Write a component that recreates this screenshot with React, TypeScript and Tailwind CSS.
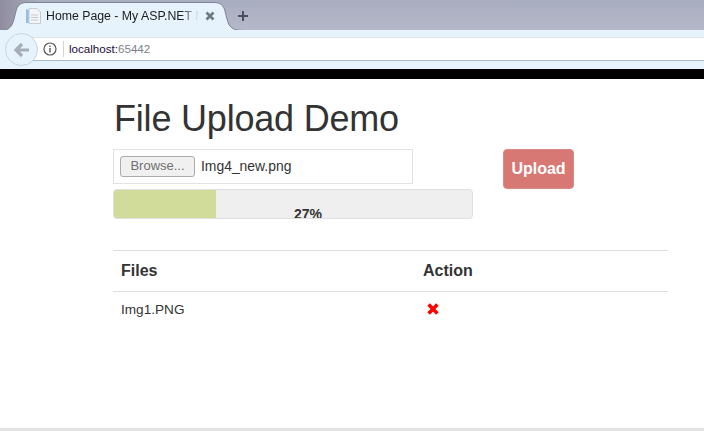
import React from 'react';

const FONT = "font-['Liberation_Sans',Arial,sans-serif]";

function TabShape() {
  return (
    <svg className="absolute left-0 top-0" width="244" height="31" viewBox="0 0 244 31">
      <path
        d="M0 30.5 C9 30.5 12 27 14 19 L16 11 C17.500 5 21 2.500 27 2.500 L214 2.500 C220 2.500 223.500 5 225 11 L227 19 C229 27 232 30.500 244 30.500 Z"
        fill="#e6f2fc"
        stroke="#7d8295"
        strokeWidth="1"
      />
      <path d="M0 31 H244" stroke="#e6f2fc" strokeWidth="1.500" />
    </svg>
  );
}

function PageIcon() {
  return (
    <svg width="16" height="16" viewBox="0 0 16 16">
      <path d="M1 1.500 H8 V15 H1 Z" fill="#8fbfe6" />
      <path d="M4 .5 H12 L15.500 4 V15.500 H4 Z" fill="#f2f4f6" stroke="#c5ccd4" />
      <path d="M6 7 H13 M6 9.500 H13 M6 12 H13" stroke="#c6ccd3" />
    </svg>
  );
}

function BrowserChrome() {
  return (
    <div>
      <div className="relative h-[30px] bg-gradient-to-b from-[#a9adc0] to-[#b4b8c8]">
        <div className="absolute left-0 top-0 h-full w-[40px] bg-gradient-to-r from-[#8f8c9e] to-transparent" />
        <TabShape />
        <div className="relative flex h-[30px] items-center pl-[25px] pt-[2px]">
          <PageIcon />
          <span className="ml-[5px] w-[153px] overflow-hidden whitespace-nowrap text-[12.3px] text-[#1c1c1c] [mask-image:linear-gradient(to_right,black_88%,transparent)]">
            Home Page - My ASP.NET MVC
          </span>
          <svg className="ml-[5px]" width="12" height="12" viewBox="0 0 12 12">
            <path d="M2.500 2.500 L9.500 9.500 M9.500 2.500 L2.500 9.500" stroke="#6f7780" strokeWidth="2.600" />
          </svg>
          <svg className="ml-[21px]" width="12" height="12" viewBox="0 0 12 12">
            <path d="M6 1 V11 M1 6 H11" stroke="#4a5060" strokeWidth="2" />
          </svg>
        </div>
      </div>
      <div className="relative h-[39px] bg-[#e6f2fc] pt-[7px]">
        <div className="ml-[21px] flex h-[24px] items-center border-y border-y-[#dce3ea] border-b-[#a9bccd] bg-white pl-[22px]">
          <svg width="14" height="14" viewBox="0 0 14 14" fill="none">
            <circle cx="7" cy="7" r="6" stroke="#555" strokeWidth="1.200" />
            <path d="M7 6 V10.500 M7 3.500 V5" stroke="#555" strokeWidth="1.400" />
          </svg>
          <span className="ml-[6px] mr-[5px] h-[16px] w-px bg-[#d3d3d3]" />
          <span className="text-[11.6px] text-[#1a0a3a]">
            localhost:<span className="text-[#7a7f88]">65442</span>
          </span>
        </div>
        <div className="absolute left-[5px] top-[3px] flex h-[33px] w-[33px] items-center justify-center rounded-full border border-[#c5d5e4] bg-[#e6f2fc]">
          <svg width="18" height="16" viewBox="0 0 18 16" fill="none">
            <path d="M9 2 L3 8 L9 14 M3.500 8 H16" stroke="#a4adb8" strokeWidth="3.200" />
          </svg>
        </div>
      </div>
      <div className="h-[10px] bg-black" />
    </div>
  );
}

export default function App() {
  return (
    <div className={`flex h-[431px] w-[704px] flex-col overflow-hidden bg-white ${FONT}`}>
      <BrowserChrome />
      <div className="flex-1 pl-[113px] pr-[36px] text-[#333]">
        <h1 className="mt-[20px] pl-px text-[36px] leading-[40px] tracking-[-0.2px]">File Upload Demo</h1>

        <div className="mt-[10px] flex">
          <div className="w-[360px]">
            <div className="flex h-[35px] w-[300px] items-center border border-[#e3e3e3] pl-[6px] text-sm">
              <span className="flex h-[21px] w-[75px] items-center justify-center rounded-[3px] border border-[#ababab] bg-[#f0f0f0] text-[13px] text-[#707070]">
                Browse...
              </span>
              <span className="ml-[6px] text-[13.9px]">Img4_new.png</span>
            </div>
            <div className="mt-[5px] flex h-[30px] overflow-hidden rounded-[4px] border border-[#e0e0e0] bg-[#efefef]">
              <div className="h-full w-[102px] bg-[#d1dc9a]" />
              <span className="flex-1 pr-[72px] pt-[15px] text-center text-sm leading-[18px] font-bold">27%</span>
            </div>
          </div>
          <button className="ml-[30px] h-[40px] w-[71px] rounded-[4px] border border-[#dc8a85] bg-[#d87874] text-base font-bold text-white">
            Upload
          </button>
        </div>

        <table className="mt-[31px] w-[555px] table-fixed border-collapse text-left">
          <thead>
            <tr className="border-y border-[#ddd]">
              <th className="h-[41px] w-[302px] pl-[8px] text-base font-bold">Files</th>
              <th className="pl-[8px] text-base font-bold">Action</th>
            </tr>
          </thead>
          <tbody>
            <tr>
              <td className="h-[37px] pb-[1px] pl-[8px] text-[13.6px]">Img1.PNG</td>
              <td className="pb-[2px] pl-[12px]">
                <svg width="12" height="12" viewBox="0 0 12 12">
                  <path d="M1.600 1.600 L10.400 10.400 M10.400 1.600 L1.600 10.400" stroke="#ff0000" strokeWidth="3.600" />
                </svg>
              </td>
            </tr>
          </tbody>
        </table>
      </div>
      <div className="h-[3px] bg-[#e3e3e3]" />
    </div>
  );
}
